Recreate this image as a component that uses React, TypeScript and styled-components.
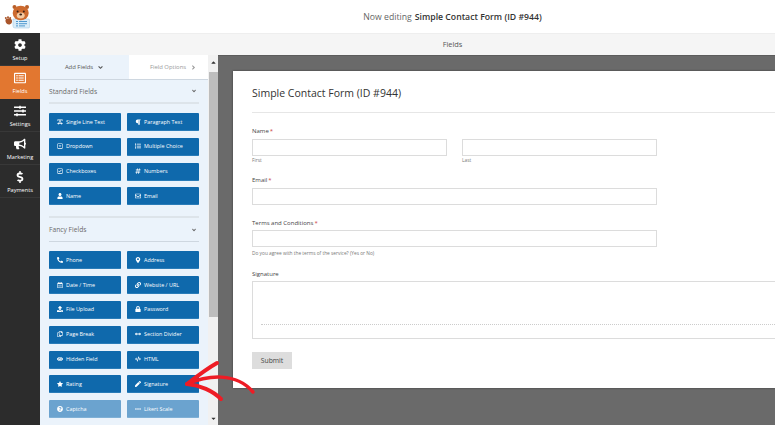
import styled, { createGlobalStyle } from 'styled-components';
import type { IconType } from 'react-icons';
import {
  FaAngleDown,
  FaAngleRight,
  FaArrowsAltH,
  FaBullhorn,
  FaCaretDown,
  FaCaretUp,
  FaCode,
  FaCog,
  FaDollarSign,
  FaEllipsisH,
  FaEye,
  FaHashtag,
  FaLink,
  FaList,
  FaLock,
  FaMapMarkerAlt,
  FaParagraph,
  FaPen,
  FaPhoneAlt,
  FaQuestionCircle,
  FaRegCalendarAlt,
  FaRegCaretSquareDown,
  FaRegCheckSquare,
  FaRegCopy,
  FaRegEnvelope,
  FaRegListAlt,
  FaSlidersH,
  FaStar,
  FaTextWidth,
  FaUpload,
  FaUser,
} from 'react-icons/fa';

const GlobalStyle = createGlobalStyle`
  html, body {
    margin: 0;
    padding: 0;
    background: #fff;
    font-family: "Open Sans", "Liberation Sans", sans-serif;
  }
  * { box-sizing: border-box; }
`;

const Page = styled.div`
  position: relative;
  width: 775px;
  height: 425px;
  overflow: hidden;
  display: flex;
  flex-direction: column;
`;

const Header = styled.header`
  height: 33px;
  flex: none;
  display: flex;
  align-items: center;
  justify-content: center;
  padding-left: 130px;
  position: relative;
  font-size: 8.7px;
  color: #666;
  strong {
    font-weight: 600;
    color: #333;
    margin-left: 3px;
  }
`;

const Logo = styled.svg`
  position: absolute;
  left: 3px;
  top: 4px;
  width: 27px;
  height: 25px;
`;

const Body = styled.div`
  flex: 1;
  display: flex;
  min-height: 0;
`;

const Sidebar = styled.nav`
  width: 40px;
  flex: none;
  background: #2c2c2c;
`;

const NavItem = styled.div<{ $active?: boolean }>`
  height: 33px;
  padding-top: 3px;
  display: flex;
  flex-direction: column;
  align-items: center;
  justify-content: center;
  gap: 3.5px;
  color: #fff;
  font-size: 5.6px;
  line-height: 7px;
  background: ${(p) => (p.$active ? '#e27730' : 'transparent')};
  border-bottom: 1px solid ${(p) => (p.$active ? '#e27730' : '#383838')};
  svg {
    font-size: 12px;
  }
`;

const Main = styled.div`
  flex: 1;
  display: flex;
  flex-direction: column;
  min-width: 0;
`;

const Toolbar = styled.div`
  height: 22px;
  flex: none;
  background: #f5f5f5;
  border-top: 1px solid #eee;
  display: flex;
  align-items: center;
  justify-content: center;
  padding: 0 0 2px 90px;
  font-size: 7.4px;
  color: #555;
`;

const Workspace = styled.div`
  flex: 1;
  display: flex;
  min-height: 0;
`;

const Panel = styled.aside`
  width: 168px;
  flex: none;
  background: #ebf3fb;
  overflow: hidden;
`;

const Tabs = styled.div`
  height: 25px;
  display: grid;
  grid-template-columns: 89px 79px;
  border-bottom: 1px solid #ced7e0;
`;

const Tab = styled.div<{ $active?: boolean }>`
  display: flex;
  align-items: center;
  justify-content: center;
  gap: 4px;
  padding-left: ${(p) => (p.$active ? 0 : 10)}px;
  font-size: 5.9px;
  color: ${(p) => (p.$active ? '#555' : '#999')};
  background: ${(p) => (p.$active ? '#ebf3fb' : '#fff')};
  svg {
    font-size: 7px;
  }
`;

const Group = styled.section`
  padding: 0 9px;
`;

const GroupHead = styled.div<{ $lined?: boolean }>`
  display: flex;
  align-items: center;
  justify-content: space-between;
  height: 24px;
  margin-bottom: 9px;
  padding: 0 2px 0 0;
  font-size: 6.7px;
  color: #6b6b6b;
  border-bottom: ${(p) => (p.$lined ? '1px solid #ced7e0' : '2px solid #dde4ea')};
  svg {
    font-size: 6px;
    color: #666;
  }
`;

const Grid = styled.div`
  display: grid;
  grid-template-columns: 72px 72px;
  grid-auto-rows: 18px;
  column-gap: 6px;
  row-gap: 6.8px;
`;

const FieldButton = styled.div<{ $muted?: boolean }>`
  display: flex;
  align-items: center;
  gap: 3px;
  padding-left: 8px;
  font-size: 5.4px;
  color: #fff;
  white-space: nowrap;
  background: ${(p) => (p.$muted ? '#6ba3cf' : '#0f69ac')};
  border-bottom: 1px solid ${(p) => (p.$muted ? '#7fb0d6' : '#2a7cb8')};
  border-radius: 1px;
  svg {
    font-size: 6px;
    flex: none;
  }
`;

const GroupBreak = styled.div`
  height: 2px;
  margin: 11px 9px 0;
  background: #dde4ea;
`;

const Scrollbar = styled.div`
  width: 10px;
  flex: none;
  background: #f1f1f1;
  display: flex;
  flex-direction: column;
  align-items: center;
`;

const ScrollArrow = styled.div`
  height: 14px;
  flex: none;
  display: flex;
  align-items: center;
  justify-content: center;
  font-size: 7px;
  color: #333;
`;

const ScrollThumb = styled.div`
  width: 9px;
  height: 245px;
  flex: none;
  margin-top: 3px;
  background: #bdbdbd;
`;

const ScrollSpacer = styled.div`
  flex: 1;
`;

const Canvas = styled.div`
  flex: 1;
  min-width: 0;
  background: #6a6a6a;
  padding: 15px 0 0 15px;
  overflow: hidden;
  border-top: 1px solid #5c5c5c;
`;

const Card = styled.form`
  height: 317px;
  background: #fff;
  padding: 15px 0 0 19px;
  box-shadow: 0 0 2px rgba(0, 0, 0, 0.45);
  overflow: hidden;
`;

const FormTitle = styled.h1`
  margin: 0;
  height: 27px;
  font-size: 10.5px;
  line-height: 14px;
  font-weight: 400;
  color: #333;
  border-bottom: 1px solid #e6e6e6;
`;

const Field = styled.div<{ $top: number }>`
  margin-top: ${(p) => p.$top}px;
`;

const Label = styled.div<{ $gap?: number }>`
  font-size: 6px;
  line-height: 9px;
  height: 9px;
  color: #444;
  margin-bottom: ${(p) => p.$gap ?? 3}px;
  span {
    color: #c44;
    margin-left: 1px;
  }
`;

const Row = styled.div`
  display: flex;
  gap: 15px;
`;

const Input = styled.div<{ $width: number }>`
  width: ${(p) => p.$width}px;
  height: 17px;
  border: 1px solid #dcdcdc;
  background: #fff;
`;

const Hint = styled.div<{ $gap?: number }>`
  font-size: 4.8px;
  line-height: 7px;
  color: #777;
  margin-top: ${(p) => p.$gap ?? 1}px;
`;

const SignatureBox = styled.div`
  width: 540px;
  height: 58px;
  border: 1px solid #dcdcdc;
  padding: 42px 0 0 8px;
`;

const SignatureLine = styled.div`
  border-top: 1px dotted #ccc;
`;

const Submit = styled.div`
  width: 40px;
  height: 17px;
  margin-top: 13px;
  background: #dddddd;
  color: #444;
  font-size: 6.8px;
  display: flex;
  align-items: center;
  justify-content: center;
`;

const Arrow = styled.svg`
  position: absolute;
  left: 180px;
  top: 355px;
  width: 80px;
  height: 50px;
  pointer-events: none;
`;

const nav: { label: string; icon: IconType; active?: boolean }[] = [
  { label: 'Setup', icon: FaCog },
  { label: 'Fields', icon: FaRegListAlt, active: true },
  { label: 'Settings', icon: FaSlidersH },
  { label: 'Marketing', icon: FaBullhorn },
  { label: 'Payments', icon: FaDollarSign },
];

type FieldDef = { label: string; icon: IconType; muted?: boolean };

const standardFields: FieldDef[] = [
  { label: 'Single Line Text', icon: FaTextWidth },
  { label: 'Paragraph Text', icon: FaParagraph },
  { label: 'Dropdown', icon: FaRegCaretSquareDown },
  { label: 'Multiple Choice', icon: FaList },
  { label: 'Checkboxes', icon: FaRegCheckSquare },
  { label: 'Numbers', icon: FaHashtag },
  { label: 'Name', icon: FaUser },
  { label: 'Email', icon: FaRegEnvelope },
];

const fancyFields: FieldDef[] = [
  { label: 'Phone', icon: FaPhoneAlt },
  { label: 'Address', icon: FaMapMarkerAlt },
  { label: 'Date / Time', icon: FaRegCalendarAlt },
  { label: 'Website / URL', icon: FaLink },
  { label: 'File Upload', icon: FaUpload },
  { label: 'Password', icon: FaLock },
  { label: 'Page Break', icon: FaRegCopy },
  { label: 'Section Divider', icon: FaArrowsAltH },
  { label: 'Hidden Field', icon: FaEye },
  { label: 'HTML', icon: FaCode },
  { label: 'Rating', icon: FaStar },
  { label: 'Signature', icon: FaPen },
  { label: 'Captcha', icon: FaQuestionCircle, muted: true },
  { label: 'Likert Scale', icon: FaEllipsisH, muted: true },
];

const FieldGrid = ({ fields }: { fields: FieldDef[] }) => (
  <Grid>
    {fields.map(({ label, icon: Icon, muted }) => (
      <FieldButton key={label} $muted={muted}>
        <Icon />
        {label}
      </FieldButton>
    ))}
  </Grid>
);

const BearLogo = () => (
  <Logo viewBox="0 0 27 25">
    <path d="M10 15h15.5a1 1 0 0 1 1 1v7a1 1 0 0 1-1 1H12a2 2 0 0 1-2-2z" fill="#d9ecf8" stroke="#a9cde6" strokeWidth="0.6" />
    <path d="M13 17.5h2M16 17.5h8M13 19.7h2M16 19.7h8M13 21.9h2M16 21.9h6" stroke="#3f8fc9" strokeWidth="0.9" />
    <circle cx="11.5" cy="3" r="2" fill="#b85f2a" />
    <circle cx="24" cy="3" r="2" fill="#b85f2a" />
    <ellipse cx="17.7" cy="9" rx="8" ry="7.3" fill="#cd6a2e" />
    <ellipse cx="17.7" cy="11.6" rx="4" ry="3" fill="#f3c9a0" />
    <circle cx="14.6" cy="7.5" r="1" fill="#3a2014" />
    <circle cx="20.8" cy="7.5" r="1" fill="#3a2014" />
    <ellipse cx="17.7" cy="10.5" rx="1.4" ry="1" fill="#3a2014" />
    <path d="M3 15c2-1.300 5-1 5.800 1 .8 2.300-.5 4.500-3 4.500S1.500 17 3 15z" fill="#a9552a" />
    <circle cx="2.800" cy="14" r="1" fill="#a9552a" />
    <circle cx="5" cy="13.300" r="1" fill="#a9552a" />
    <circle cx="7.200" cy="14" r="1" fill="#a9552a" />
  </Logo>
);

const App = () => {
  return (
    <Page>
      <GlobalStyle />
      <Header>
        <BearLogo />
        Now editing <strong>Simple Contact Form (ID #944)</strong>
      </Header>
      <Body>
        <Sidebar>
          {nav.map(({ label, icon: Icon, active }) => (
            <NavItem key={label} $active={active}>
              <Icon />
              {label}
            </NavItem>
          ))}
        </Sidebar>
        <Main>
          <Toolbar>Fields</Toolbar>
          <Workspace>
            <Panel>
              <Tabs>
                <Tab $active>
                  Add Fields <FaAngleDown />
                </Tab>
                <Tab>
                  Field Options <FaAngleRight />
                </Tab>
              </Tabs>
              <Group>
                <GroupHead>
                  Standard Fields <FaAngleDown />
                </GroupHead>
                <FieldGrid fields={standardFields} />
              </Group>
              <GroupBreak />
              <Group>
                <GroupHead $lined>
                  Fancy Fields <FaAngleDown />
                </GroupHead>
                <FieldGrid fields={fancyFields} />
              </Group>
            </Panel>
            <Scrollbar>
              <ScrollArrow>
                <FaCaretUp />
              </ScrollArrow>
              <ScrollThumb />
              <ScrollSpacer />
              <ScrollArrow>
                <FaCaretDown />
              </ScrollArrow>
            </Scrollbar>
            <Canvas>
              <Card>
                <FormTitle>Simple Contact Form (ID #944)</FormTitle>
                <Field $top={14}>
                  <Label>
                    Name<span>*</span>
                  </Label>
                  <Row>
                    <div>
                      <Input $width={195} />
                      <Hint>First</Hint>
                    </div>
                    <div>
                      <Input $width={195} />
                      <Hint>Last</Hint>
                    </div>
                  </Row>
                </Field>
                <Field $top={12}>
                  <Label>
                    Email<span>*</span>
                  </Label>
                  <Input $width={405} />
                </Field>
                <Field $top={14}>
                  <Label $gap={2}>
                    Terms and Conditions<span>*</span>
                  </Label>
                  <Input $width={405} />
                  <Hint $gap={3}>Do you agree with the terms of the service? (Yes or No)</Hint>
                </Field>
                <Field $top={13}>
                  <Label $gap={2}>Signature</Label>
                  <SignatureBox>
                    <SignatureLine />
                  </SignatureBox>
                </Field>
                <Submit>Submit</Submit>
              </Card>
            </Canvas>
          </Workspace>
        </Main>
      </Body>
      <Arrow viewBox="0 0 80 50" fill="none" stroke="#ee1c25" strokeLinecap="round" strokeLinejoin="round">
        <path d="M7 29C28 20 56 17 73 37" strokeWidth="3.500" />
        <path d="M7 29C16 22 28 13 37 8" strokeWidth="4" />
        <path d="M7 29C20 30 33 36 41 44" strokeWidth="4" />
      </Arrow>
    </Page>
  );
};

export default App;
